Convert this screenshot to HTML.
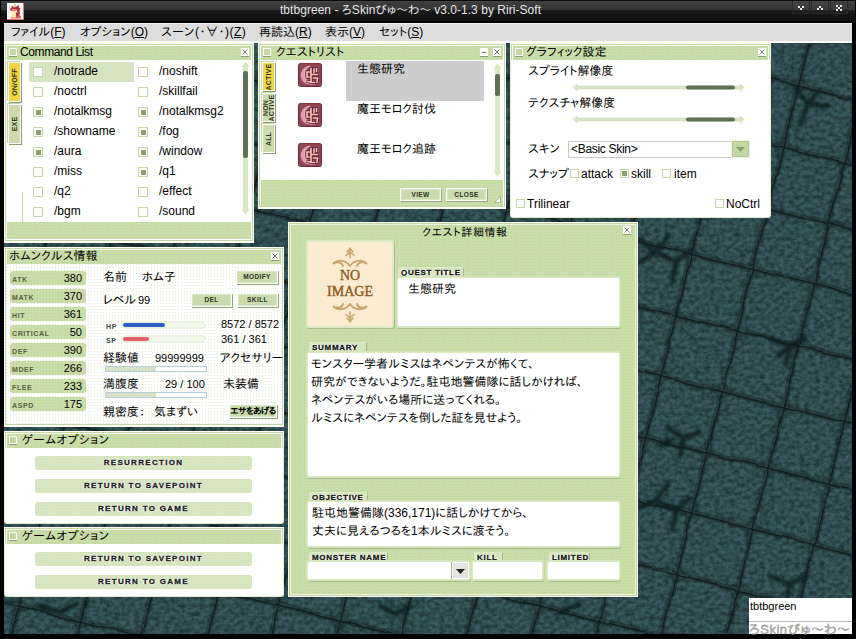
<!DOCTYPE html>
<html lang="ja">
<head>
<meta charset="utf-8">
<title>tbtbgreen</title>
<style>
html,body{margin:0;padding:0;}
body{width:856px;height:639px;overflow:hidden;background:#000;position:relative;
 font-family:"Liberation Sans","IPAPGothic","IPAGothic","Noto Sans CJK JP",sans-serif;font-size:12px;color:#000;line-height:1;}
*{box-sizing:border-box;}
div,span,svg{position:absolute;}
u{text-decoration:underline;}
#titlebar{left:0;top:0;width:856px;height:23px;background:linear-gradient(#0a0a0a 0,#0a0a0a 1px,#484848 1px,#3e3e3e 2px,#343434 10px,#1c1c1c 10px,#0d0d0d 21px,#000 22px);border-left:1px solid #000;border-right:1px solid #000;}
#titletext{left:279px;top:4px;letter-spacing:0.04px;color:#e4e4e4;font-size:12px;white-space:nowrap;}
#menubar{left:4px;top:23px;width:848px;height:20px;background:#dcdcdc;border-top:1px solid #f0f0f0;border-bottom:2px solid #fff;}
#menubar span{top:2px;font-size:12px;white-space:nowrap;}
#desk{left:4px;top:43px;width:848px;height:591px;background:#2f474a;overflow:hidden;}
.panel{background:#fff;border:1px solid #fcfef6;box-shadow:inset 0 0 0 1px #c4d6a2, inset 0 0 0 2px #fff;}
.pA{border-bottom-width:2px;}
.pB{background:#fff;border:1px solid #e0ebcc;border-top:none;border-radius:0 0 3px 3px;}
.tB{overflow:hidden;}
.tB>div{left:0;top:0;right:0;height:40px;background:#fff;border:1px solid #fcfef6;box-shadow:inset 0 0 0 1px #c4d6a2, inset 0 0 0 2px #fff;}
.dots2{background-color:#d8e5c3;background-image:radial-gradient(circle at 0.5px 0.5px,#cfe0ae 0.6px,rgba(207,224,174,0) 0.9px);background-size:3px 3px;}
.dots{background-color:#c9dcab;background-image:radial-gradient(circle at 0.5px 0.5px,#bdd882 0.6px,rgba(189,216,130,0) 0.9px);background-size:3px 3px;}
.ico{width:8px;height:8px;border:1px solid #fff;background:#c3d7a2;box-shadow:0 1px 0 #8c9c72;}
.xbtn{width:8px;height:8px;background:#fff;box-shadow:0 1px 0 #8c9c72;}
.xbtn svg{left:0;top:0;}
.t{white-space:nowrap;font-size:12px;}
.n{white-space:nowrap;font-size:11px;}
.cb{width:10px;height:10px;border:1px solid #c5d6a6;background:#fff;}
.cb.on::after{content:"";position:absolute;left:2px;top:2px;width:5px;height:5px;background:#8d9f6f;}
.cb9{width:9px;height:9px;border:1px solid #c5d6a6;background:#fff;}
.cb9.on::after{content:"";position:absolute;left:1px;top:1px;width:5px;height:5px;background:#8d9f6f;}
.px{font-family:"Liberation Sans",sans-serif;font-weight:bold;font-size:8px;letter-spacing:0.6px;color:#2c3320;white-space:nowrap;}
.btn{background:#cadcae;border:1px solid #fff;box-shadow:1px 1px 0 #93a478, inset 0 0 0 1px #d9e6c4;text-align:center;}
.btn .px{left:0;right:0;top:0;bottom:0;display:block;font-size:6.5px;letter-spacing:0.4px;}
.vtab{border:1px solid #fff;box-shadow:1px 1px 0 #8c9c72,-1px -1px 0 #c5d6a6;background:#cadcae;}
.vtab.y{background:#f0d544;}
.vtab span{left:50%;top:50%;transform:translate(-50%,-50%) rotate(-90deg);font-weight:bold;font-size:7px;letter-spacing:0.2px;color:#33331c;white-space:nowrap;line-height:6px;text-align:center;font-family:"Liberation Sans",sans-serif;}
.gbtn{border-radius:3px;text-align:center;}
.gbtn .px{left:0;right:0;top:0;font-size:8px;line-height:14px;letter-spacing:1.3px;color:#1c1c1c;display:block;-webkit-text-stroke:0.3px #1c1c1c;text-shadow:1px 0 0 #f4f8ec,-1px 0 0 #f4f8ec,0 1px 0 #f4f8ec,0 -1px 0 #f4f8ec;}
.lbl{height:10px;border-right:1px solid #a9b88c;background:#d6e5bd;border-radius:3px 0 0 0;box-shadow:-1px -1px 0 #dcebc6;}
.lbl .px{left:2px;top:0;font-size:8px;line-height:9px;color:#10160a;letter-spacing:0.7px;-webkit-text-stroke:0.3px #10160a;text-shadow:1px 0 0 #fff,-1px 0 0 #fff,0 1px 0 #fff,0 -1px 0 #fff;}
.box{background:#fff;border:1px solid #d9e9c0;border-radius:2px;box-shadow:0 0 0 1px #d3e4b8,1px 2px 0 #a9ba8a;}
.stat{border-radius:3px;}
</style>
</head>
<body>
<div id="titlebar"><svg style="left:6px;top:3px" width="17" height="17" viewBox="0 0 17 17"><rect width="16" height="16" fill="#fff"/><path d="M16.500 0V16.500H0" stroke="#e87078" stroke-width="1" fill="none"/><path d="M2.500 4L4 6L5 2.500L7 4.500L8 0.500L9.500 4L11.500 1.500L12 5L13.500 4.500L12.500 8L13 11H11L10 8H4.500L3 7Z" fill="#a83038"/><path d="M6 2.500L8 1.500L9.500 3L8 4.500Z" fill="#f0d890"/><rect x="4.500" y="6" width="5.500" height="2" fill="#ee7880"/><rect x="4.500" y="8" width="4.500" height="7" fill="#f6e0b0"/><path d="M9 9L12 10L14 15H9Z" fill="#d05058"/><path d="M9 10L11 11L10.500 13Z" fill="#30181c"/><rect x="3.500" y="14.500" width="10" height="1" fill="#e06068"/></svg><div id="titletext">tbtbgreen - ろSkinびゅ～わ～ v3.0-1.3 by Riri-Soft</div><div style="left:791px;top:1px;width:18px;height:13px;border:1px solid #2a2a2a;border-top:none;background:linear-gradient(#444 0,#3a3a3a 9px,#222 9px,#1c1c1c 13px);"></div><div style="left:810px;top:1px;width:18px;height:13px;border:1px solid #2a2a2a;border-top:none;background:linear-gradient(#444 0,#3a3a3a 9px,#222 9px,#1c1c1c 13px);"></div><div style="left:829px;top:1px;width:18px;height:13px;border:1px solid #2a2a2a;border-top:none;background:linear-gradient(#444 0,#3a3a3a 9px,#222 9px,#1c1c1c 13px);"></div><svg style="left:791px;top:2px" width="57" height="13" viewBox="0 0 57 13"><g fill="#e6e6e6">
<rect x="6" y="4" width="2" height="2"/><rect x="10" y="4" width="2" height="2"/><rect x="8" y="6" width="2" height="2"/>
<rect x="27" y="4" width="2" height="2"/><rect x="25" y="6" width="2" height="2"/><rect x="29" y="6" width="2" height="2"/>
<rect x="44" y="3" width="2" height="2"/><rect x="48" y="3" width="2" height="2"/><rect x="46" y="5" width="2" height="2"/><rect x="44" y="7" width="2" height="2"/><rect x="48" y="7" width="2" height="2"/>
</g></svg></div>
<div id="menubar"><span style="left:7px">ファイル(<u>F</u>)</span><span style="left:76px">オプション(<u>O</u>)</span><span style="left:157px;letter-spacing:0.5px">スーン(･∀･)(<u>Z</u>)</span><span style="left:255px">再読込(<u>R</u>)</span><span style="left:321px">表示(<u>V</u>)</span><span style="left:375px">セット(<u>S</u>)</span></div>
<div id="desk"><svg width="848" height="591" viewBox="4 43 848 591" style="left:0;top:0">
<defs>
<filter id="nz" x="0" y="0" width="100%" height="100%" color-interpolation-filters="sRGB"><feTurbulence type="fractalNoise" baseFrequency="0.2 0.24" numOctaves="4" seed="11" result="n"/><feColorMatrix in="n" type="matrix" values="0 0 0 0 0.05  0 0 0 0 0.10  0 0 0 0 0.11  1.1 0 0 0 -0.33"/></filter>
<filter id="bl" x="0" y="0" width="100%" height="100%" color-interpolation-filters="sRGB"><feTurbulence type="fractalNoise" baseFrequency="0.03" numOctaves="2" seed="3" result="w"/><feDisplacementMap in="SourceGraphic" in2="w" scale="5" xChannelSelector="R" yChannelSelector="G" result="d"/><feGaussianBlur in="d" stdDeviation="0.6"/></filter>
<filter id="cb"><feGaussianBlur stdDeviation="1.5"/></filter>
<pattern id="tile" width="63" height="63" patternUnits="userSpaceOnUse" patternTransform="translate(737 330) rotate(14)">
<rect width="63" height="63" fill="#2c4347"/>
<rect x="3" y="3" width="57" height="57" rx="7" fill="#395a5f"/>
<path d="M0 0H63M0 0V63" stroke="#0c181a" stroke-width="2.400"/>
</pattern>
</defs>
<rect x="4" y="43" width="848" height="591" fill="url(#tile)" filter="url(#bl)"/>
<g filter="url(#cb)" opacity="0.85" stroke="#0d1b1d" stroke-width="4.500" fill="none" stroke-linecap="round" stroke-linejoin="round">
<path d="M640 262L656 252L668 236M656 252L676 262L690 250M676 262L672 282M640 240L652 250"/>
<path d="M770 338L790 346L806 338M790 346L786 364M790 346L778 356"/>
<path d="M668 428L684 438L700 432M684 438L680 456M660 446L672 440"/>
<path d="M640 508L656 500L668 484M656 500L676 510L690 498M676 510L672 530"/>
<path d="M796 88L808 104L828 106M808 104L800 124M808 104L818 92"/>
<path d="M770 576L790 584L806 576M790 584L786 602"/>
<path d="M40 606L60 612L76 604M380 606L396 614L410 606M560 612L580 604"/>
</g>
<rect x="4" y="43" width="848" height="591" filter="url(#nz)"/>
</svg></div>
<div id="cmd" class="panel pA" style="left:4px;top:43px;width:250px;height:200px;"></div>
<div class="dots" style="left:7px;top:46px;width:244px;height:14px;"></div>
<div class="ico" style="left:9px;top:48px;width:8px;height:8px;"></div>
<div class="t" style="left:20px;top:46px;letter-spacing:-0.4px">Command List</div>
<div class="xbtn" style="left:241px;top:48px;width:8px;height:8px;"><svg width="8" height="8" viewBox="0 0 8 8"><path d="M1.5 1.500L6.500 6.500M6.500 1.500L1.500 6.500" stroke="#6f7e58" stroke-width="1" fill="none"/></svg></div>
<div class="vtab y" style="left:8px;top:62px;width:13px;height:40px;"><span>ON/OFF</span></div>
<div class="vtab" style="left:8px;top:104px;width:13px;height:40px;"><span>EXE</span></div>
<div class="" style="left:22px;top:192px;width:1px;height:30px;background:#c5d6a6"></div>
<div class="" style="left:29px;top:62px;width:105px;height:20px;background:#d5e3c0"></div>
<div class="cb" style="left:33px;top:67px;width:10px;height:10px;"></div>
<div class="t" style="left:54px;top:65px;">/notrade</div>
<div class="cb" style="left:138px;top:67px;width:10px;height:10px;"></div>
<div class="t" style="left:159px;top:65px;">/noshift</div>
<div class="cb" style="left:33px;top:87px;width:10px;height:10px;"></div>
<div class="t" style="left:54px;top:85px;">/noctrl</div>
<div class="cb" style="left:138px;top:87px;width:10px;height:10px;"></div>
<div class="t" style="left:159px;top:85px;">/skillfail</div>
<div class="cb on" style="left:33px;top:107px;width:10px;height:10px;"></div>
<div class="t" style="left:54px;top:105px;">/notalkmsg</div>
<div class="cb on" style="left:138px;top:107px;width:10px;height:10px;"></div>
<div class="t" style="left:159px;top:105px;">/notalkmsg2</div>
<div class="cb on" style="left:33px;top:127px;width:10px;height:10px;"></div>
<div class="t" style="left:54px;top:125px;">/showname</div>
<div class="cb on" style="left:138px;top:127px;width:10px;height:10px;"></div>
<div class="t" style="left:159px;top:125px;">/fog</div>
<div class="cb on" style="left:33px;top:147px;width:10px;height:10px;"></div>
<div class="t" style="left:54px;top:145px;">/aura</div>
<div class="cb on" style="left:138px;top:147px;width:10px;height:10px;"></div>
<div class="t" style="left:159px;top:145px;">/window</div>
<div class="cb" style="left:33px;top:167px;width:10px;height:10px;"></div>
<div class="t" style="left:54px;top:165px;">/miss</div>
<div class="cb on" style="left:138px;top:167px;width:10px;height:10px;"></div>
<div class="t" style="left:159px;top:165px;">/q1</div>
<div class="cb" style="left:33px;top:187px;width:10px;height:10px;"></div>
<div class="t" style="left:54px;top:185px;">/q2</div>
<div class="cb" style="left:138px;top:187px;width:10px;height:10px;"></div>
<div class="t" style="left:159px;top:185px;">/effect</div>
<div class="cb" style="left:33px;top:207px;width:10px;height:10px;"></div>
<div class="t" style="left:54px;top:205px;">/bgm</div>
<div class="cb" style="left:138px;top:207px;width:10px;height:10px;"></div>
<div class="t" style="left:159px;top:205px;">/sound</div>
<svg style="left:241px;top:62px" width="9" height="152" viewBox="0 0 9 152"><path d="M4.500 0L8 4.500H6.500V147.5H8L4.500 152L1 147.5H2.500V4.500H1Z" fill="#d9e6c4" stroke="#c8d9aa" stroke-width="0.5"/><rect x="2" y="9" width="5" height="87" rx="2" fill="#5f7055"/></svg>
<div class="dots" style="left:7px;top:222px;width:244px;height:17px;"></div>
<div id="qlist" class="panel pA" style="left:258px;top:43px;width:248px;height:166px;"></div>
<div class="dots" style="left:261px;top:46px;width:242px;height:14px;"></div>
<div class="ico" style="left:263px;top:48px;width:8px;height:8px;"></div>
<div class="t" style="left:276px;top:46px;">クエストリスト</div>
<div class="xbtn" style="left:480px;top:48px;width:8px;height:8px;"><svg width="8" height="8" viewBox="0 0 8 8"><path d="M2 4.500H6" stroke="#6f7e58" stroke-width="1"/></svg></div>
<div class="xbtn" style="left:493px;top:48px;width:8px;height:8px;"><svg width="8" height="8" viewBox="0 0 8 8"><path d="M1.5 1.500L6.500 6.500M6.500 1.500L1.500 6.500" stroke="#6f7e58" stroke-width="1" fill="none"/></svg></div>
<div class="vtab y" style="left:262px;top:62px;width:13px;height:29px;"><span>ACTIVE</span></div>
<div class="vtab" style="left:262px;top:93px;width:13px;height:29px;"><span>NON<br>ACTIVE</span></div>
<div class="vtab" style="left:262px;top:124px;width:13px;height:29px;"><span>ALL</span></div>
<div class="" style="left:346px;top:61px;width:138px;height:40px;background:#cdcdcd"></div>
<svg style="left:298px;top:63px" width="24" height="24" viewBox="0 0 24 24"><rect x="0.500" y="0.500" width="23" height="23" rx="2" fill="#8e4652" stroke="#6a2834"/><path d="M1.500 1H22.500" stroke="#a83844" stroke-width="1"/><path d="M12 2.500C5 3 1 10 3.500 16C6 22 14 23 20.500 20C13 21 7.500 17.500 7.500 11.500C7.500 7.500 9 5 12.500 3.500Z" fill="#dca4ae"/><path d="M13 5.500V19.500M9 9H13M9 9V14H11M16 6V9.500M18.500 5.500V8.500M14.500 11.500H19.500M15.500 15H19.500L19 19M10 18.500L13 19.500H16.500" stroke="#55182a" stroke-width="2.800" fill="none" stroke-linecap="square" stroke-linejoin="miter"/><path d="M13 5.500V19.500M9 9H13M9 9V14H11M16 6V9.500M18.500 5.500V8.500M14.500 11.500H19.500M15.500 15H19.500L19 19M10 18.500L13 19.500H16.500" stroke="#fbc6b6" stroke-width="1.600" fill="none" stroke-linecap="square" stroke-linejoin="miter"/></svg>
<div class="t" style="left:357px;top:63px;">生態研究</div>
<svg style="left:298px;top:103px" width="24" height="24" viewBox="0 0 24 24"><rect x="0.500" y="0.500" width="23" height="23" rx="2" fill="#8e4652" stroke="#6a2834"/><path d="M1.500 1H22.500" stroke="#a83844" stroke-width="1"/><path d="M12 2.500C5 3 1 10 3.500 16C6 22 14 23 20.500 20C13 21 7.500 17.500 7.500 11.500C7.500 7.500 9 5 12.500 3.500Z" fill="#dca4ae"/><path d="M13 5.500V19.500M9 9H13M9 9V14H11M16 6V9.500M18.500 5.500V8.500M14.500 11.500H19.500M15.500 15H19.500L19 19M10 18.500L13 19.500H16.500" stroke="#55182a" stroke-width="2.800" fill="none" stroke-linecap="square" stroke-linejoin="miter"/><path d="M13 5.500V19.500M9 9H13M9 9V14H11M16 6V9.500M18.500 5.500V8.500M14.500 11.500H19.500M15.500 15H19.500L19 19M10 18.500L13 19.500H16.500" stroke="#fbc6b6" stroke-width="1.600" fill="none" stroke-linecap="square" stroke-linejoin="miter"/></svg>
<div class="t" style="left:357px;top:103px;">魔王モロク討伐</div>
<svg style="left:298px;top:143px" width="24" height="24" viewBox="0 0 24 24"><rect x="0.500" y="0.500" width="23" height="23" rx="2" fill="#8e4652" stroke="#6a2834"/><path d="M1.500 1H22.500" stroke="#a83844" stroke-width="1"/><path d="M12 2.500C5 3 1 10 3.500 16C6 22 14 23 20.500 20C13 21 7.500 17.500 7.500 11.500C7.500 7.500 9 5 12.500 3.500Z" fill="#dca4ae"/><path d="M13 5.500V19.500M9 9H13M9 9V14H11M16 6V9.500M18.500 5.500V8.500M14.500 11.500H19.500M15.500 15H19.500L19 19M10 18.500L13 19.500H16.500" stroke="#55182a" stroke-width="2.800" fill="none" stroke-linecap="square" stroke-linejoin="miter"/><path d="M13 5.500V19.500M9 9H13M9 9V14H11M16 6V9.500M18.500 5.500V8.500M14.500 11.500H19.500M15.500 15H19.500L19 19M10 18.500L13 19.500H16.500" stroke="#fbc6b6" stroke-width="1.600" fill="none" stroke-linecap="square" stroke-linejoin="miter"/></svg>
<div class="t" style="left:357px;top:143px;">魔王モロク追跡</div>
<svg style="left:493px;top:64px" width="9" height="112" viewBox="0 0 9 112"><path d="M4.500 0L8 4.500H6.500V107.5H8L4.500 112L1 107.5H2.500V4.500H1Z" fill="#d9e6c4" stroke="#c8d9aa" stroke-width="0.5"/><rect x="2" y="10" width="5" height="22" rx="2" fill="#5f7055"/></svg>
<div class="dots" style="left:261px;top:180px;width:242px;height:26px;"></div>
<div class="btn" style="left:400px;top:188px;width:41px;height:13px;"><span class="px" style="line-height:11px">VIEW</span></div>
<div class="btn" style="left:446px;top:188px;width:41px;height:13px;"><span class="px" style="line-height:11px">CLOSE</span></div>
<svg style="left:494px;top:196px" width="7" height="7" viewBox="0 0 7 7"><path d="M6.500 0.500V6.500H0.500Z" fill="#fff" stroke="#9aab7e" stroke-width="0.8"/></svg>
<div id="gfx" class="pB" style="left:510px;top:60px;width:261px;height:158px;"></div>
<div class="tB" style="left:510px;top:43px;width:261px;height:17px;"><div></div></div>
<div class="dots" style="left:513px;top:46px;width:255px;height:14px;"></div>
<div class="ico" style="left:515px;top:48px;width:8px;height:8px;"></div>
<div class="t" style="left:526px;top:46px;">グラフィック設定</div>
<div class="xbtn" style="left:758px;top:48px;width:8px;height:8px;"><svg width="8" height="8" viewBox="0 0 8 8"><path d="M1.5 1.500L6.500 6.500M6.500 1.500L1.500 6.500" stroke="#6f7e58" stroke-width="1" fill="none"/></svg></div>
<div class="t" style="left:528px;top:65px;">スプライト解像度</div>
<div class="t" style="left:528px;top:97px;">テクスチャ解像度</div>
<svg style="left:573px;top:83px" width="171" height="9" viewBox="0 0 171 9"><path d="M0 4.500L4 1V3H167V1L171 4.500L167 8V6H4V8Z" fill="#d9e6c4" stroke="#c8d9aa" stroke-width="0.5"/><rect x="113" y="2.500" width="49" height="4" rx="2" fill="#5f7055"/></svg>
<svg style="left:573px;top:115px" width="171" height="9" viewBox="0 0 171 9"><path d="M0 4.500L4 1V3H167V1L171 4.500L167 8V6H4V8Z" fill="#d9e6c4" stroke="#c8d9aa" stroke-width="0.5"/><rect x="113" y="2.500" width="49" height="4" rx="2" fill="#5f7055"/></svg>
<div class="t" style="left:528px;top:143px;">スキン</div>
<div class="" style="left:568px;top:141px;width:182px;height:17px;border:1px solid #c8c8c8;background:#fff"></div>
<div class="t" style="left:571px;top:143px;letter-spacing:-0.3px">&lt;Basic Skin&gt;</div>
<div class="" style="left:731px;top:140px;width:19px;height:18px;background:#c3d7a2;border:1px solid #eef4e0;box-shadow:0 0 0 1px #b5c894 inset;"><svg style="left:4px;top:6px" width="9" height="5" viewBox="0 0 9 5"><path d="M0 0H9L4.500 5Z" fill="#8d9f6f"/></svg></div>
<div class="t" style="left:528px;top:168px;">スナップ</div>
<div class="cb9" style="left:570px;top:169px;width:9px;height:9px;"></div>
<div class="t" style="left:581px;top:168px;">attack</div>
<div class="cb9 on" style="left:620px;top:169px;width:9px;height:9px;"></div>
<div class="t" style="left:631px;top:168px;">skill</div>
<div class="cb9" style="left:662px;top:169px;width:9px;height:9px;"></div>
<div class="t" style="left:674px;top:168px;">item</div>
<div class="cb9" style="left:516px;top:199px;width:9px;height:9px;"></div>
<div class="t" style="left:527px;top:198px;">Trilinear</div>
<div class="cb9" style="left:715px;top:199px;width:9px;height:9px;"></div>
<div class="t" style="left:726px;top:198px;">NoCtrl</div>
<div id="hom" class="panel pA" style="left:4px;top:247px;width:280px;height:180px;"></div>
<div class="" style="left:7px;top:264px;width:274px;height:160px;background-image:radial-gradient(circle at 0.5px 0.5px,#e3ecd2 0.6px,rgba(227,236,210,0) 0.9px);background-size:3px 3px;"></div>
<div class="dots" style="left:7px;top:250px;width:274px;height:14px;"></div>
<div class="t" style="left:9px;top:250px;">ホムンクルス情報</div>
<div class="xbtn" style="left:271px;top:252px;width:8px;height:8px;"><svg width="8" height="8" viewBox="0 0 8 8"><path d="M1.5 1.500L6.500 6.500M6.500 1.500L1.500 6.500" stroke="#6f7e58" stroke-width="1" fill="none"/></svg></div>
<div class="dots stat" style="left:10px;top:271px;width:76px;height:14px;"><span class="px" style="left:2px;top:5px;color:#56633f;font-size:7px">ATK</span><span class="n" style="right:4px;top:2px;">380</span></div>
<div class="dots stat" style="left:10px;top:289px;width:76px;height:14px;"><span class="px" style="left:2px;top:5px;color:#56633f;font-size:7px">MATK</span><span class="n" style="right:4px;top:2px;">370</span></div>
<div class="dots stat" style="left:10px;top:307px;width:76px;height:14px;"><span class="px" style="left:2px;top:5px;color:#56633f;font-size:7px">HIT</span><span class="n" style="right:4px;top:2px;">361</span></div>
<div class="dots stat" style="left:10px;top:325px;width:76px;height:14px;"><span class="px" style="left:2px;top:5px;color:#56633f;font-size:7px">CRITICAL</span><span class="n" style="right:4px;top:2px;">50</span></div>
<div class="dots stat" style="left:10px;top:343px;width:76px;height:14px;"><span class="px" style="left:2px;top:5px;color:#56633f;font-size:7px">DEF</span><span class="n" style="right:4px;top:2px;">390</span></div>
<div class="dots stat" style="left:10px;top:361px;width:76px;height:14px;"><span class="px" style="left:2px;top:5px;color:#56633f;font-size:7px">MDEF</span><span class="n" style="right:4px;top:2px;">266</span></div>
<div class="dots stat" style="left:10px;top:379px;width:76px;height:14px;"><span class="px" style="left:2px;top:5px;color:#56633f;font-size:7px">FLEE</span><span class="n" style="right:4px;top:2px;">233</span></div>
<div class="dots stat" style="left:10px;top:397px;width:76px;height:14px;"><span class="px" style="left:2px;top:5px;color:#56633f;font-size:7px">ASPD</span><span class="n" style="right:4px;top:2px;">175</span></div>
<div class="t" style="left:103px;top:271px;">名前</div>
<div class="t" style="left:142px;top:271px;">ホム子</div>
<div class="btn" style="left:236px;top:270px;width:42px;height:14px;"><span class="px" style="line-height:12px">MODIFY</span></div>
<div class="t" style="left:103px;top:294px;">レベル</div>
<div class="n" style="left:138px;top:295px;">99</div>
<div class="btn" style="left:191px;top:293px;width:41px;height:14px;"><span class="px" style="line-height:12px">DEL</span></div>
<div class="btn" style="left:237px;top:293px;width:41px;height:14px;"><span class="px" style="line-height:12px">SKILL</span></div>
<span class="px" style="left:106px;top:323px;font-size:7px;color:#444">HP</span><svg style="left:121px;top:321px" width="86" height="8" viewBox="0 0 86 8"><path d="M1 4L4 1H82L85 4L82 7H4Z" fill="#f6f9ee" stroke="#dfe8cf" stroke-width="1"/><rect x="2" y="2" width="42" height="4" rx="2" fill="#2a5fc4"/></svg>
<div class="n" style="left:221px;top:319px;">8572 / 8572</div>
<span class="px" style="left:106px;top:337px;font-size:7px;color:#444">SP</span><svg style="left:121px;top:335px" width="86" height="8" viewBox="0 0 86 8"><path d="M1 4L4 1H82L85 4L82 7H4Z" fill="#f6f9ee" stroke="#dfe8cf" stroke-width="1"/><rect x="2" y="2" width="26" height="4" rx="2" fill="#e0606c"/></svg>
<div class="n" style="left:221px;top:334px;">361 / 361</div>
<div class="t" style="left:103px;top:352px;">経験値</div>
<div class="n" style="left:155px;top:353px;">99999999</div>
<div class="t" style="left:220px;top:352px;width:63px;height:13px;overflow:hidden">アクセサリー</div>
<div style="left:105px;top:366px;width:102px;height:6px;border:1px solid #b9cfd6;background:#fff;"><div style="left:0;top:0;width:50px;height:4px;background:#d5e0c6;"></div></div>
<div class="t" style="left:103px;top:378px;">満腹度</div>
<div class="n" style="left:165px;top:379px;">29 / 100</div>
<div class="t" style="left:223px;top:378px;">未装備</div>
<div style="left:105px;top:392px;width:102px;height:6px;border:1px solid #b9cfd6;background:#fff;"><div style="left:0;top:0;width:50px;height:4px;background:#d5e0c6;"></div></div>
<div class="t" style="left:103px;top:406px;">親密度</div>
<div class="t" style="left:139px;top:406px;">：</div>
<div class="t" style="left:154px;top:406px;">気まずい</div>
<div class="btn" style="left:229px;top:404px;width:48px;height:14px;"><span style="left:0;right:0;top:0;font-size:9px;line-height:12px;display:block;font-weight:bold;letter-spacing:-0.6px;white-space:nowrap">エサをあげる</span></div>
<div id="go1" class="pB" style="left:4px;top:448px;width:280px;height:76px;"></div>
<div class="tB" style="left:4px;top:431px;width:280px;height:17px;"><div></div></div>
<div class="dots" style="left:7px;top:434px;width:274px;height:14px;"></div>
<div class="ico" style="left:9px;top:436px;width:8px;height:8px;"></div>
<div class="t" style="left:22px;top:434px;letter-spacing:0.5px">ゲームオプション</div>
<div class="dots2 gbtn" style="left:35px;top:456px;width:217px;height:14px;"><span class="px">RESURRECTION</span></div>
<div class="dots2 gbtn" style="left:35px;top:479px;width:217px;height:14px;"><span class="px">RETURN TO SAVEPOINT</span></div>
<div class="dots2 gbtn" style="left:35px;top:502px;width:217px;height:14px;"><span class="px">RETURN TO GAME</span></div>
<div id="go2" class="pB" style="left:4px;top:544px;width:280px;height:53px;"></div>
<div class="tB" style="left:4px;top:527px;width:280px;height:17px;"><div></div></div>
<div class="dots" style="left:7px;top:530px;width:274px;height:14px;"></div>
<div class="ico" style="left:9px;top:532px;width:8px;height:8px;"></div>
<div class="t" style="left:22px;top:530px;letter-spacing:0.5px">ゲームオプション</div>
<div class="dots2 gbtn" style="left:35px;top:552px;width:217px;height:14px;"><span class="px">RETURN TO SAVEPOINT</span></div>
<div class="dots2 gbtn" style="left:35px;top:575px;width:217px;height:14px;"><span class="px">RETURN TO GAME</span></div>
<div id="qd" class="panel dots" style="left:288px;top:222px;width:350px;height:375px;box-shadow:inset 0 0 0 1px #c2d4a0, inset 0 0 0 2px #eef4e0;"></div>
<div class="t" style="left:290px;top:227px;width:350px;text-align:center;font-size:11px;letter-spacing:0.6px">クエスト詳細情報</div>
<div class="xbtn" style="left:623px;top:226px;width:8px;height:8px;"><svg width="8" height="8" viewBox="0 0 8 8"><path d="M1.5 1.500L6.500 6.500M6.500 1.500L1.500 6.500" stroke="#6f7e58" stroke-width="1" fill="none"/></svg></div>
<div class="" style="left:306px;top:240px;width:88px;height:88px;background:#fcebd0;border:2px solid #dcebc6;border-radius:3px;box-shadow:1px 1px 0 #a9ba8a;"><div style="left:0;width:84px;top:26px;text-align:center;font-family:'Liberation Serif',serif;font-size:14px;line-height:16px;color:#8c5c22;-webkit-text-stroke:0.4px #8c5c22;">NO<br>IMAGE</div><svg style="left:22px;top:5px" width="40" height="22" viewBox="0 0 40 22"><g stroke="#c9a46c" fill="none" stroke-linecap="round"><path d="M20 1V11M17 5L20 1.500L23 5M16 8.500L20 5L24 8.500" stroke-width="1.500"/><path d="M20 19C16 13 8 12 3 17C6 14 12 15 13 19M20 19C24 13 32 12 37 17C34 14 28 15 27 19" stroke-width="2"/></g></svg><svg style="left:22px;top:59px" width="40" height="22" viewBox="0 0 40 22"><g stroke="#c9a46c" fill="none" stroke-linecap="round"><path d="M20 21V11M17 17L20 20.500L23 17M16 13.500L20 17L24 13.500" stroke-width="1.500"/><path d="M20 3C16 9 8 10 3 5C6 8 12 7 13 3M20 3C24 9 32 10 37 5C34 8 28 7 27 3" stroke-width="2"/></g></svg></div>
<div class="lbl" style="left:399px;top:268px;width:65px;height:9px;"><span class="px">QUEST TITLE</span></div>
<div class="box" style="left:397px;top:277px;width:223px;height:50px;"></div>
<div class="t" style="left:408px;top:283px;">生態研究</div>
<div class="lbl" style="left:310px;top:343px;width:57px;height:9px;"><span class="px">SUMMARY</span></div>
<div class="box" style="left:307px;top:352px;width:313px;height:125px;"></div>
<div class="t" style="left:311px;top:358px;">モンスター学者ルミスはネペンテスが怖くて、</div>
<div class="t" style="left:311px;top:376px;">研究ができないようだ。駐屯地警備隊に話しかければ、</div>
<div class="t" style="left:311px;top:394px;">ネペンテスがいる場所に送ってくれる。</div>
<div class="t" style="left:311px;top:412px;">ルミスにネペンテスを倒した証を見せよう。</div>
<div class="lbl" style="left:310px;top:493px;width:58px;height:9px;"><span class="px">OBJECTIVE</span></div>
<div class="box" style="left:307px;top:501px;width:313px;height:46px;"></div>
<div class="t" style="left:312px;top:507px;">駐屯地警備隊(336,171)に話しかけてから、</div>
<div class="t" style="left:312px;top:525px;">丈夫に見えるつるを1本ルミスに渡そう。</div>
<div class="lbl" style="left:310px;top:553px;width:78px;height:9px;"><span class="px">MONSTER NAME</span></div>
<div class="box" style="left:307px;top:561px;width:163px;height:19px;"></div>
<div class="" style="left:452px;top:562px;width:17px;height:17px;background:#e4e4e0;border:1px solid #fff;box-shadow:-1px 0 0 #aaa;"><svg style="left:3px;top:6px" width="9" height="5" viewBox="0 0 9 5"><path d="M0 0H9L4.500 5Z" fill="#222"/></svg></div>
<div class="lbl" style="left:475px;top:553px;width:28px;height:9px;"><span class="px">KILL</span></div>
<div class="box" style="left:472px;top:561px;width:71px;height:19px;"></div>
<div class="lbl" style="left:550px;top:553px;width:40px;height:9px;"><span class="px">LIMITED</span></div>
<div class="box" style="left:547px;top:561px;width:73px;height:19px;"></div>
<div class="" style="left:749px;top:598px;width:103px;height:36px;background:#fff"></div>
<div class="" style="left:749px;top:621px;width:103px;height:1px;background:#b8b8b8"></div>
<div class="t" style="left:750px;top:601px;font-size:11px">tbtbgreen</div>
<div class="t" style="left:749px;top:623px;font-size:13px;color:#c0c0c0;-webkit-text-stroke:0.4px #888;letter-spacing:0.5px">ろSkinびゅ～わ～</div>
</body>
</html>
